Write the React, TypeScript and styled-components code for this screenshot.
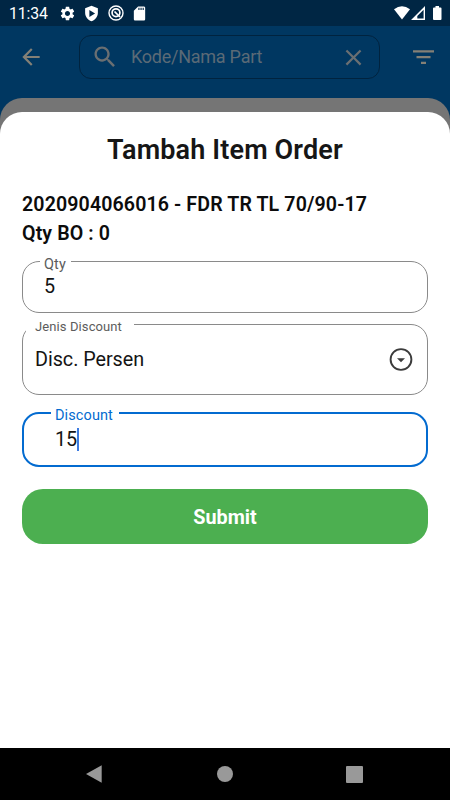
import React from "react";
import styled, { createGlobalStyle } from "styled-components";

const GlobalStyle = createGlobalStyle`
  * { box-sizing: border-box; }
  body { margin: 0; background: #fff; font-family: Roboto, "Liberation Sans", sans-serif; }
`;

const Screen = styled.div`
  width: 450px;
  height: 800px;
  display: flex;
  flex-direction: column;
  overflow: hidden;
  background: #003761;
`;

const StatusBar = styled.header`
  height: 26px;
  flex: none;
  display: flex;
  align-items: center;
  justify-content: space-between;
  padding: 0 7px 0 9px;
  background: #002644;
  color: #fff;
`;

const StatusGroup = styled.div`
  display: flex;
  align-items: center;
  gap: 7.5px;
`;

const Clock = styled.span`
  width: 42px;
  font-size: 15.8px;
  line-height: 26px;
  letter-spacing: -0.1px;
  padding-top: 2px;
`;

const AppBar = styled.div`
  height: 72px;
  flex: none;
  display: flex;
  align-items: flex-start;
  padding: 9px 14px 0 18px;
  color: #848076;
`;

const IconSlot = styled.div<{ $width: number }>`
  width: ${(p) => p.$width}px;
  flex: none;
  height: 44px;
  display: flex;
  align-items: center;
`;

const SearchBox = styled.div`
  width: 301px;
  flex: none;
  height: 44px;
  display: flex;
  align-items: center;
  padding: 0 12px 0 11px;
  border: 1px solid #00233f;
  border-radius: 12px;
  color: #6a6f72;
`;

const Placeholder = styled.span`
  flex: 1;
  padding-left: 12px;
  font-size: 18px;
  line-height: 24px;
  letter-spacing: -0.25px;
  color: #5b6a76;
`;

const BackPanel = styled.div`
  flex: 1;
  display: flex;
  flex-direction: column;
  padding-top: 14px;
  background: #757575;
  border-radius: 22px 22px 0 0;
`;

const Sheet = styled.main`
  flex: 1;
  display: flex;
  flex-direction: column;
  padding: 22px 22px 0;
  background: #fff;
  border-radius: 22px 22px 0 0;
`;

const Title = styled.h1`
  margin: 0;
  text-align: center;
  font-size: 27px;
  line-height: 32px;
  font-weight: 600;
  letter-spacing: 0.15px;
  color: #161616;
`;

const ItemInfo = styled.div`
  margin-top: 25px;
  font-size: 19.6px;
  line-height: 28.5px;
  font-weight: 600;
  letter-spacing: 0.12px;
  color: #0c0c0c;
`;

const Field = styled.div<{ $height: number; $top: number; $inset: number; $focused?: boolean }>`
  position: relative;
  flex: none;
  height: ${(p) => p.$height}px;
  margin-top: ${(p) => p.$top}px;
  padding: 0 ${(p) => (p.$focused ? 11 : 12)}px 0 ${(p) => p.$inset}px;
  display: flex;
  align-items: center;
  justify-content: space-between;
  border: ${(p) => (p.$focused ? "2px solid #036bd0" : "1px solid #8a8a8a")};
  border-radius: 17px;
`;

const Label = styled.label<{ $left: number; $top: number; $width: number; $pad: number; $size: number; $color: string }>`
  position: absolute;
  left: ${(p) => p.$left}px;
  top: ${(p) => p.$top}px;
  width: ${(p) => p.$width}px;
  padding-left: ${(p) => p.$pad}px;
  font-size: ${(p) => p.$size}px;
  line-height: 16px;
  letter-spacing: 0.1px;
  white-space: nowrap;
  background: #fff;
  color: ${(p) => p.$color};
`;

const Value = styled.span`
  display: flex;
  align-items: center;
  font-size: 19.8px;
  line-height: 24px;
  letter-spacing: -0.05px;
  color: #141414;
`;

const Caret = styled.i`
  width: 2px;
  height: 23px;
  background: #3c7be0;
`;

const SubmitButton = styled.button`
  flex: none;
  height: 55px;
  margin-top: 22px;
  padding: 2px 0 0;
  border: 0;
  border-radius: 21px;
  background: #4caf50;
  color: #fff;
  font-family: inherit;
  font-size: 19.8px;
  font-weight: 700;
`;

const NavBar = styled.nav`
  height: 52px;
  flex: none;
  display: flex;
  justify-content: space-between;
  align-items: center;
  padding: 0 87px 0 85px;
  background: #000;
`;

const Svg = styled.svg`
  display: block;
  flex: none;
`;

const DropIcon = styled(Svg)`
  color: #3b3b3b;
`;

type IconProps = { d: string; size: number };
const Icon = ({ d, size }: IconProps) => (
  <Svg width={size} height={size} viewBox="0 0 24 24" fill="currentColor">
    <path fillRule="evenodd" d={d} />
  </Svg>
);

const paths = {
  gear: "M19.14 12.94c.04-.3.06-.61.06-.94 0-.32-.02-.64-.07-.94l2.03-1.58c.18-.14.23-.41.12-.61l-1.92-3.32c-.12-.22-.37-.29-.59-.22l-2.39.96c-.5-.38-1.03-.7-1.62-.94l-.36-2.54c-.04-.24-.24-.41-.48-.41h-3.84c-.24 0-.43.17-.47.41l-.36 2.54c-.59.24-1.13.57-1.62.94l-2.39-.96c-.22-.08-.47 0-.59.22L2.74 8.87c-.12.21-.08.47.12.61l2.03 1.58c-.05.3-.09.63-.09.94s.02.64.07.94l-2.03 1.58c-.18.14-.23.41-.12.61l1.92 3.32c.12.22.37.29.59.22l2.39-.96c.5.38 1.03.7 1.62.94l.36 2.54c.05.24.24.41.48.41h3.84c.24 0 .44-.17.47-.41l.36-2.54c.59-.24 1.13-.56 1.62-.94l2.39.96c.22.08.47 0 .59-.22l1.92-3.32c.12-.22.07-.47-.12-.61l-2.01-1.58zM12 15.6c-1.98 0-3.6-1.62-3.6-3.6s1.62-3.6 3.6-3.6 3.6 1.62 3.6 3.6-1.62 3.6-3.6 3.6z",
  shield: "M12 1 3 4.5V11c0 5.6 3.8 10.3 9 12 5.2-1.7 9-6.4 9-12V4.5L12 1zM9 7l8 5-8 5z",
  sdCard: "M18 2h-8L4 8v12c0 1.1.9 2 2 2h12c1.1 0 2-.9 2-2V4c0-1.1-.9-2-2-2zm-6 5h-1.6V4H12v3zm3 0h-1.6V4H15v3zm3 0h-1.6V4H18v3z",
  back: "M20 11H7.83l5.59-5.59L12 4l-8 8 8 8 1.41-1.41L7.83 13H20v-2z",
  search: "M15.5 14h-.79l-.28-.27C15.41 12.59 16 11.11 16 9.5 16 5.91 13.09 3 9.5 3S3 5.91 3 9.5 5.91 16 9.5 16c1.61 0 3.09-.59 4.23-1.57l.27.28v.79l5 4.99L20.49 19l-4.99-5zm-6 0C7.01 14 5 11.99 5 9.5S7.01 5 9.5 5 14 7.01 14 9.5 11.99 14 9.5 14z",
  close: "M19 6.41 17.59 5 12 10.59 6.41 5 5 6.41 10.59 12 5 17.59 6.41 19 12 13.41 17.59 19 19 17.59 13.41 12z",
};

export default function App() {
  return (
    <>
      <GlobalStyle />
      <Screen>
        <StatusBar>
          <StatusGroup>
            <Clock>11:34</Clock>
            <Icon d={paths.gear} size={17} />
            <Icon d={paths.shield} size={17} />
            <Svg width="16" height="16" viewBox="0 0 16 16" fill="none" stroke="currentColor">
              <circle cx="8" cy="8" r="7" strokeWidth="1.4" />
              <circle cx="8" cy="7.7" r="3.9" strokeWidth="1.7" />
              <path d="M6.5 6.5 12 12" strokeWidth="1.7" />
            </Svg>
            <Icon d={paths.sdCard} size={17} />
          </StatusGroup>
          <Svg width="50" height="16" viewBox="0 0 50 16" fill="currentColor">
            <path d="M1 4.2Q9 -1.8 17 4.2L9 14.5Z" />
            <path fillRule="evenodd" d="M18 15 32 1V15ZM24.3 13.4H30.6V4.8L24.3 11Z" />
            <path d="M41 2.5H42.5V1H46V2.5H47.5Q48.5 2.5 48.5 3.5V14Q48.5 15 47.5 15H41Q40 15 40 14V3.5Q40 2.5 41 2.5Z" />
          </Svg>
        </StatusBar>

        <AppBar>
          <IconSlot $width={61}><Icon d={paths.back} size={26} /></IconSlot>
          <SearchBox>
            <Icon d={paths.search} size={28} />
            <Placeholder>Kode/Nama Part</Placeholder>
            <Icon d={paths.close} size={27} />
          </SearchBox>
          <IconSlot $width={56}>
            <Svg width="56" height="26" viewBox="-32.5 0 56 26" fill="currentColor">
              <path d="M.5 6.2h21v2.2H.5zM4 12h14v2.2H4zM8.5 17.8h5V20h-5z" />
            </Svg>
          </IconSlot>
        </AppBar>

        <BackPanel>
          <Sheet>
            <Title>Tambah Item Order</Title>
            <ItemInfo>
              2020904066016 - FDR TR TL 70/90-17
              <br />
              Qty BO : 0
            </ItemInfo>

            <Field $height={52} $top={13} $inset={21}>
              <Label $left={17} $top={-5} $width={31} $pad={4} $size={14.5} $color="#5c5c5c">Qty</Label>
              <Value>5</Value>
            </Field>

            <Field $height={71} $top={11} $inset={12}>
              <Label $left={2.5} $top={-6} $width={108} $pad={9.5} $size={13} $color="#5c5c5c">Jenis Discount</Label>
              <Value>Disc. Persen</Value>
              <DropIcon width="28" height="28" viewBox="0 0 28 28" fill="currentColor">
                <circle cx="14" cy="13.5" r="10.4" fill="none" stroke="currentColor" strokeWidth="1.9" />
                <path d="M10 12.3h8l-4 4z" />
              </DropIcon>
            </Field>

            <Field $height={55} $top={17} $inset={31} $focused>
              <Label $left={27} $top={-6} $width={68} $pad={4} $size={14.5} $color="#036bd0">Discount</Label>
              <Value>15<Caret /></Value>
            </Field>

            <SubmitButton>Submit</SubmitButton>
          </Sheet>
        </BackPanel>

        <NavBar>
          <Svg width="18" height="18" viewBox="0 0 18 18" fill="#999"><path d="M1 9 16.7 .3V17.7Z" /></Svg>
          <Svg width="16" height="16" viewBox="0 0 16 16" fill="#999"><circle cx="8" cy="8" r="8" /></Svg>
          <Svg width="17" height="17" viewBox="0 0 17 17" fill="#999"><rect width="17" height="17" rx="1" /></Svg>
        </NavBar>
      </Screen>
    </>
  );
}
